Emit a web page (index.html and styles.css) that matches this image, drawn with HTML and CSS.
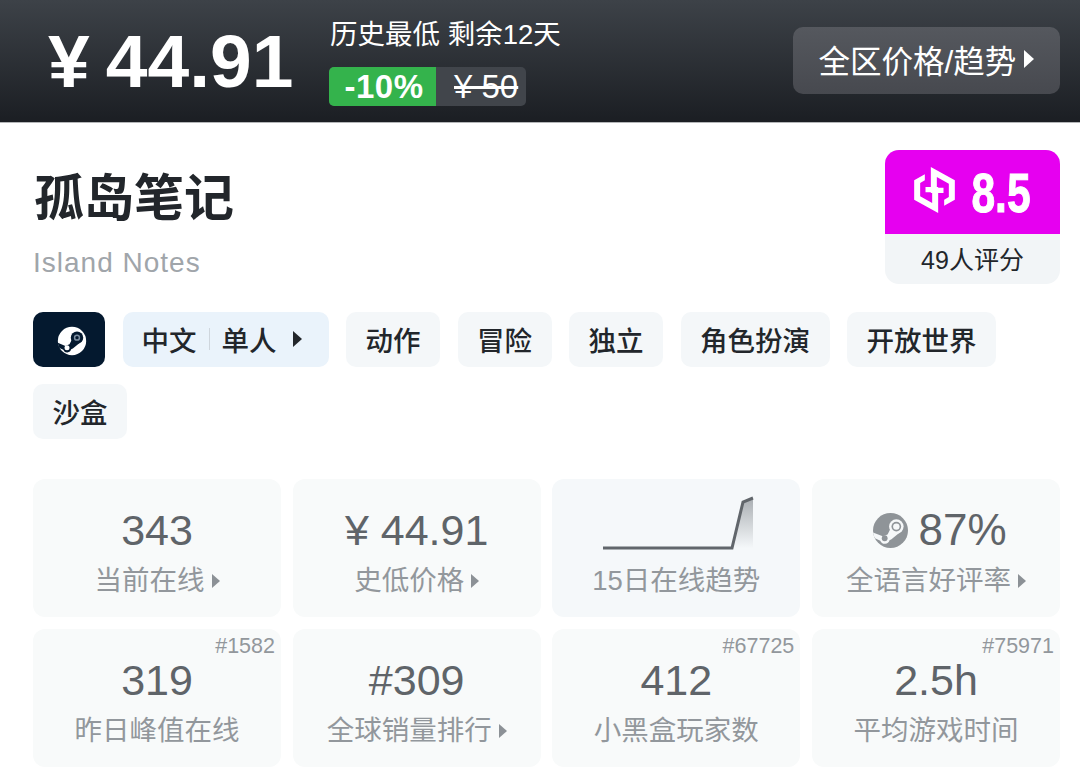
FILE: index.html
```html
<!DOCTYPE html>
<html lang="zh">
<head>
    <meta charset="UTF-8">
    <meta name="viewport" content="width=device-width, initial-scale=1.0">
    <title>孤岛笔记</title>
    <link rel="stylesheet" href="styles.css">
</head>
<body>
    <div class="price-bar">
        <div class="price">¥<span class="price-num">44.91</span></div>
        <div class="price-info">
            <div class="price-note">历史最低 剩余12天</div>
            <div class="discount">
                <span class="discount-pct">-10%</span>
                <span class="discount-old"><s>¥ 50</s></span>
            </div>
        </div>
        <div class="region-btn">全区价格/趋势<i class="arrow arrow-white"></i></div>
    </div>

    <div class="content">
        <div class="game-head">
            <div>
                <h1>孤岛笔记</h1>
                <div class="name-en">Island Notes</div>
            </div>
            <div class="score">
                <div class="score-top">
                    <svg class="score-logo" viewBox="0 0 122 138">
                        <path d="M50 0 L122 40 L122 98 L90 116 L90 98 L104 90 L104 50 L68 30 L68 62 L88 62 L88 78 L50 78 Z" fill="#fff"/>
                        <path d="M72 138 L0 98 L0 40 L32 22 L32 40 L18 48 L18 88 L54 108 L54 76 L34 76 L34 60 L72 60 Z" fill="#fff"/>
                    </svg>
                    <span class="score-num">8.5</span>
                </div>
                <div class="score-count">49人评分</div>
            </div>
        </div>

        <div class="tags">
            <div class="tag tag-steam">
                <svg class="steam-icon" viewBox="0 0 36 36">
                    <circle cx="18" cy="18" r="17" fill="#fff"/>
                    <path d="M1 20 L10 24 L15 22 L20 12 L30 18 L19 27 L17 28 A5 5 0 0 1 7.500 28.500 L3 26.500 A17 17 0 0 1 1 20 Z" fill="#04192f"/>
                    <circle cx="24" cy="14" r="7.500" fill="#04192f"/>
                    <circle cx="24" cy="14" r="3.800" fill="#7d8ea0"/>
                    <circle cx="24" cy="14" r="2" fill="#04192f"/>
                    <circle cx="12" cy="26" r="3" fill="#fff"/>
                </svg>
            </div>
            <div class="tag tag-lang">
                <span>中文</span><i class="tag-sep"></i><span>单人</span><i class="arrow arrow-dark"></i>
            </div>
            <div class="tag">动作</div>
            <div class="tag">冒险</div>
            <div class="tag">独立</div>
            <div class="tag">角色扮演</div>
            <div class="tag">开放世界</div>
            <div class="tag">沙盒</div>
        </div>

        <div class="stats">
            <div class="stat">
                <div class="stat-val">343</div>
                <div class="stat-label">当前在线<i class="arrow arrow-gray"></i></div>
            </div>
            <div class="stat">
                <div class="stat-val">¥ 44.91</div>
                <div class="stat-label">史低价格<i class="arrow arrow-gray"></i></div>
            </div>
            <div class="stat stat-trend">
                <svg class="spark" viewBox="0 0 152 56">
                    <defs>
                        <linearGradient id="sparkFill" x1="0" y1="0" x2="0" y2="1">
                            <stop offset="0" stop-color="#a9aeb2"/>
                            <stop offset="1" stop-color="#f5f8fa"/>
                        </linearGradient>
                    </defs>
                    <path d="M130 53 L141 7 L151 3 L151 53 Z" fill="url(#sparkFill)"/>
                    <path d="M1 53 L130 53 L141 7 L151 3" fill="none" stroke="#61666b" stroke-width="3"/>
                </svg>
                <div class="stat-label">15日在线趋势</div>
            </div>
            <div class="stat">
                <div class="stat-val stat-val-icon">
                    <svg class="steam-round" viewBox="0 0 36 36">
                        <circle cx="18" cy="18" r="18" fill="#8f9498"/>
                        <path d="M0 20 L10 24 L15 22 L20 12 L30 18 L19 27 L17 28 A5 5 0 0 1 7.500 28.500 L2 26 A18 18 0 0 1 0 20 Z" fill="#f6f8f9"/>
                        <circle cx="24" cy="14" r="7.500" fill="#f6f8f9"/>
                        <circle cx="24" cy="14" r="5" fill="#8f9498"/>
                        <circle cx="24" cy="14" r="3.300" fill="#f6f8f9"/>
                        <circle cx="12" cy="26" r="3" fill="#8f9498"/>
                    </svg>
                    <span>87%</span>
                </div>
                <div class="stat-label">全语言好评率<i class="arrow arrow-gray"></i></div>
            </div>
            <div class="stat">
                <span class="stat-rank">#1582</span>
                <div class="stat-val">319</div>
                <div class="stat-label">昨日峰值在线</div>
            </div>
            <div class="stat">
                <div class="stat-val">#309</div>
                <div class="stat-label">全球销量排行<i class="arrow arrow-gray"></i></div>
            </div>
            <div class="stat">
                <span class="stat-rank">#67725</span>
                <div class="stat-val">412</div>
                <div class="stat-label">小黑盒玩家数</div>
            </div>
            <div class="stat">
                <span class="stat-rank">#75971</span>
                <div class="stat-val">2.5h</div>
                <div class="stat-label">平均游戏时间</div>
            </div>
        </div>
    </div>
</body>
</html>
```

FILE: styles.css
```css
* {
    box-sizing: border-box;
}
html, body {
    height: 784px;
    overflow: hidden;
}
body {
    margin: 0;
    background-color: #fff;
    color: #22262b;
    font-family: "Liberation Sans", "Noto Sans CJK SC", sans-serif;
}
.arrow {
    display: inline-block;
    flex: none;
    width: 0;
    height: 0;
    border-style: solid;
    border-color: transparent;
    border-right-width: 0;
}
.arrow-white {
    margin-left: 8px;
    border-width: 9px 0 9px 10px;
    border-left-color: #fff;
}
.arrow-dark {
    margin-left: 18px;
    border-width: 8px 0 8px 9px;
    border-left-color: #22262b;
}
.arrow-gray {
    margin-left: 7px;
    border-width: 7px 0 7px 8px;
    border-left-color: #8c9196;
}

/* price bar */
.price-bar {
    display: flex;
    align-items: center;
    height: 123px;
    padding: 0 20px 0 48px;
    border-bottom: 1px solid #b4b6b8;
    background: linear-gradient(#3d4248, #1b1e23);
    color: #fff;
}
.price {
    width: 282px;
    font-size: 75px;
    font-weight: bold;
    line-height: 1;
}
.price-num {
    margin-left: 16px;
}
.price-info {
    width: 463px;
}
.price-note {
    margin-bottom: 14px;
    font-size: 27.500px;
    line-height: 36px;
}
.discount {
    display: flex;
    width: 197px;
    height: 39px;
    margin-left: -1px;
    border-radius: 5px;
    overflow: hidden;
    background-color: #41454b;
    font-size: 33px;
    line-height: 39px;
}
.discount-pct {
    width: 107px;
    padding-left: 3px;
    background-color: #34b34c;
    text-align: center;
    font-weight: bold;
    letter-spacing: 0.5px;
}
.discount-old {
    flex: 1;
    padding-left: 6px;
}
.discount-old s {
    padding: 0 3px 0 12px;
}
.region-btn {
    display: flex;
    align-items: center;
    justify-content: center;
    width: 267px;
    height: 67px;
    margin-top: -2px;
    padding-bottom: 3px;
    border-radius: 10px;
    background: linear-gradient(#55585e, #47494f);
    font-size: 31.500px;
}

.content {
    padding: 27px 20px 0 33px;
}

/* title and score */
.game-head {
    display: flex;
    justify-content: space-between;
    height: 134px;
}
h1 {
    margin: 19px 0 0 1px;
    font-size: 50px;
    line-height: 60px;
    font-weight: bold;
}
.name-en {
    margin-top: 16px;
    font-size: 28px;
    line-height: 36px;
    letter-spacing: 1px;
    color: #a0a5aa;
}
.score {
    width: 175px;
    border-radius: 14px;
    overflow: hidden;
    background-color: #f2f5f7;
}
.score-top {
    display: flex;
    align-items: center;
    justify-content: center;
    height: 84px;
    background-color: #e600f0;
    color: #fff;
}
.score-logo {
    width: 41px;
    height: 46px;
    margin-top: -4px;
}
.score-num {
    display: flex;
    justify-content: center;
    width: 60px;
    margin-left: 16px;
    font-size: 56px;
    font-weight: bold;
    -webkit-text-stroke: 1px #fff;
    transform: scaleX(0.76);
}
.score-count {
    height: 50px;
    font-size: 25px;
    line-height: 53px;
    text-align: center;
}

/* tags */
.tags {
    display: flex;
    flex-wrap: wrap;
    gap: 17px 17.500px;
    margin-top: 28px;
}
.tag {
    display: flex;
    align-items: center;
    height: 55px;
    padding: 0 19.500px 2px;
    border-radius: 10px;
    background-color: #f4f7f9;
    font-size: 27.500px;
    font-weight: 500;
}
.tag-steam {
    justify-content: center;
    width: 72px;
    padding: 2px 0 0 5px;
    background-color: #04192f;
}
.steam-icon {
    width: 30px;
    height: 30px;
}
.tag-lang {
    width: 206px;
    padding: 0 19px 2px;
    background-color: #eaf3fb;
}
.tag-lang .arrow-dark {
    margin-left: 16px;
}
.tag-sep {
    width: 1px;
    height: 22px;
    margin: 0 12px;
    background-color: #cfd6dd;
}

/* stats */
.stats {
    display: grid;
    grid-template-columns: repeat(4, minmax(0, 1fr));
    gap: 12px 11.670px;
    margin-top: 40px;
}
.stat {
    position: relative;
    display: flex;
    flex-direction: column;
    align-items: center;
    height: 138px;
    padding-top: 24px;
    border-radius: 12px;
    background-color: #f8fafa;
}
.stat-trend {
    background-color: #f5f8fa;
    padding-top: 16px;
}
.stat-val {
    display: flex;
    align-items: center;
    height: 54px;
    font-size: 43px;
    color: #5f6469;
}
.stat-val-icon {
    gap: 10px;
    padding-left: 8px;
    font-size: 44px;
}
.steam-round {
    width: 35px;
    height: 35px;
}
.stat-label {
    display: flex;
    align-items: center;
    margin-top: 4px;
    font-size: 27.500px;
    line-height: 40px;
    color: #92979c;
}
.stat-rank {
    position: absolute;
    top: 3px;
    right: 6px;
    font-size: 21.500px;
    line-height: 28px;
    color: #92979c;
}
.spark {
    width: 152px;
    height: 56px;
    margin: 0 0 6px 3px;
}
```
